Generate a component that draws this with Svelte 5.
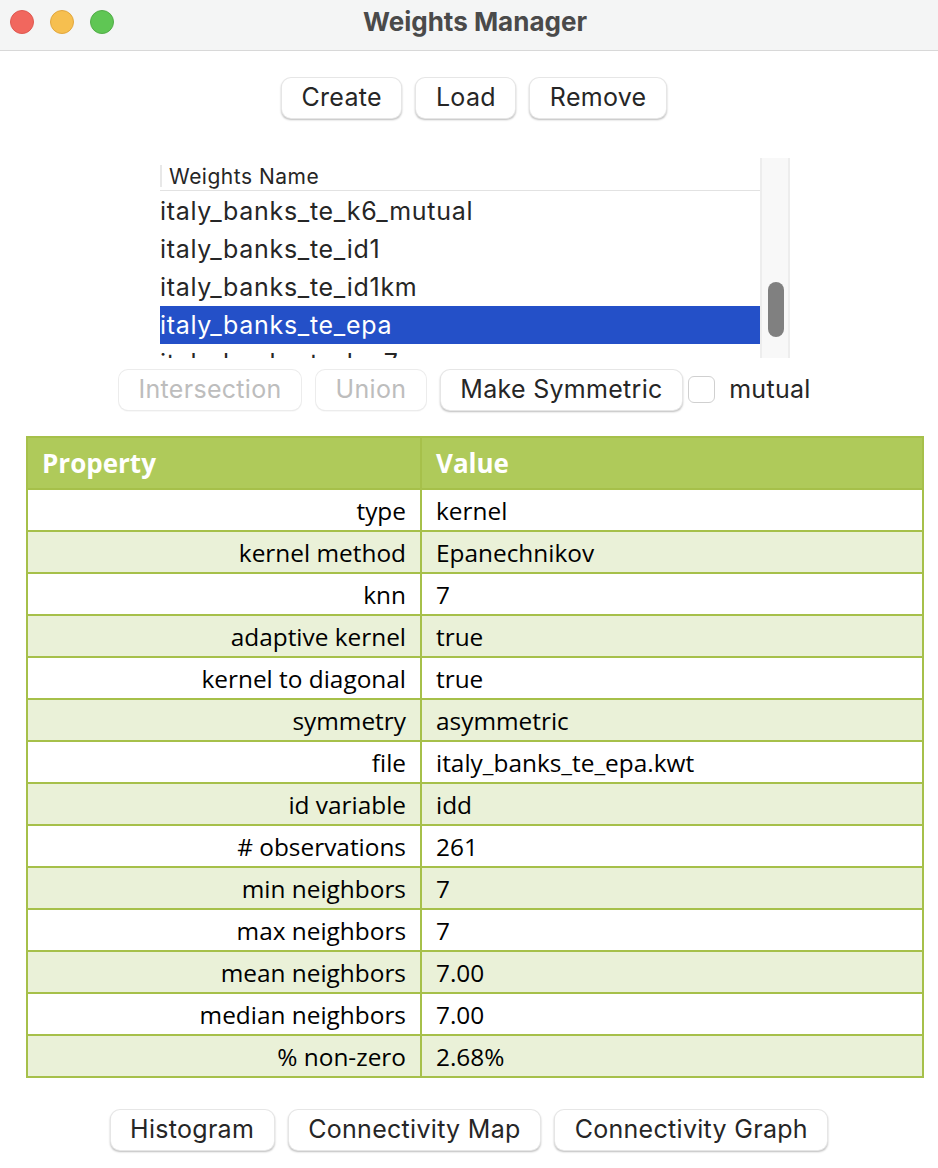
<script>
	const weights = ['italy_banks_te_k6_mutual', 'italy_banks_te_id1', 'italy_banks_te_id1km', 'italy_banks_te_epa', 'italy_banks_te_km7'];
	const props = [
		['type', 'kernel'],
		['kernel method', 'Epanechnikov'],
		['knn', '7'],
		['adaptive kernel', 'true'],
		['kernel to diagonal', 'true'],
		['symmetry', 'asymmetric'],
		['file', 'italy_banks_te_epa.kwt'],
		['id variable', 'idd'],
		['# observations', '261'],
		['min neighbors', '7'],
		['max neighbors', '7'],
		['mean neighbors', '7.00'],
		['median neighbors', '7.00'],
		['% non-zero', '2.68%']
	];
</script>

<div class="window">
	<header class="titlebar">
		<div class="lights">
			<span class="light red"></span>
			<span class="light yellow"></span>
			<span class="light green"></span>
		</div>
		<div class="title">Weights Manager</div>
	</header>

	<div class="btn-row top">
		<button class="btn">Create</button>
		<button class="btn">Load</button>
		<button class="btn">Remove</button>
	</div>

	<div class="list-box">
		<div class="list">
			<div class="list-head"><span>Weights Name</span></div>
			{#each weights as name, i}
				<div class="list-row" class:selected={i == 3}>{name}</div>
			{/each}
		</div>
		<div class="scroll"><div class="thumb"></div></div>
	</div>

	<div class="btn-row ops">
		<button class="btn off">Intersection</button>
		<button class="btn off">Union</button>
		<button class="btn">Make Symmetric</button>
		<label class="check"><span class="box"></span>mutual</label>
	</div>

	<div class="table">
		<div class="cell th left">Property</div>
		<div class="cell th right">Value</div>
		{#each props as p, i}
			<div class="cell key" class:alt={i % 2 == 1}>{p[0]}</div>
			<div class="cell val" class:alt={i % 2 == 1}>{p[1]}</div>
		{/each}
	</div>

	<div class="btn-row bottom">
		<button class="btn">Histogram</button>
		<button class="btn">Connectivity Map</button>
		<button class="btn">Connectivity Graph</button>
	</div>
</div>

<style>
:global(body) {
	background: #fff;
}
.window {
	width: 938px;
	height: 1168px;
	overflow: hidden;
	background: #fff;
	font-family: Inter, "Liberation Sans", sans-serif;
	color: #262626;
}
.titlebar {
	height: 50px;
	border-bottom: 1px solid #d8d8d8;
	background: #f4f5f5;
	position: relative;
	display: flex;
	align-items: center;
	justify-content: center;
}
.lights {
	position: absolute;
	left: 10px;
	top: 10px;
	display: flex;
	gap: 16px;
}
.light {
	width: 24px;
	height: 24px;
	border-radius: 50%;
	box-sizing: border-box;
}
.red { background: #f1675e; border: 1px solid #df5950; }
.yellow { background: #f6bf4f; border: 1px solid #e2a73e; }
.green { background: #5fc654; border: 1px solid #52ad48; }
.title {
	font-size: 26px;
	font-weight: 700;
	color: #4a4a4a;
	margin: -7px 0 0 12px;
}
.btn-row {
	display: flex;
	justify-content: center;
	gap: 15px;
}
.top {
	margin-top: 27px;
	padding-left: 10px;
}
.btn {
	height: 40px;
	padding: 0 19.5px 2px;
	border: 0;
	border-radius: 9px;
	background: #fff;
	box-shadow: 0 0 0 1px #e6e6e6, 0 1.5px 2px 0.5px #bdbdbd;
	font: 25px Inter, "Liberation Sans", sans-serif;
	letter-spacing: 0.3px;
	color: #262626;
}
.off {
	color: #bdbdbd;
	box-shadow: 0 0 0 1px #ececec, 0 1px 1.5px #dcdcdc;
}
.list-box {
	margin: 40px 0 0 160px;
	width: 630px;
	height: 200px;
	display: flex;
	overflow: hidden;
}
.list {
	width: 600px;
	overflow: hidden;
}
.list-head {
	height: 33px;
	box-sizing: border-box;
	border-bottom: 1px solid #e2e2e2;
	font-size: 21px;
	letter-spacing: 0.5px;
	display: flex;
	align-items: flex-end;
	position: relative;
	margin-bottom: 1px;
}
.list-head span {
	border-left: 2px solid #e8e8e8;
	height: 22px;
	line-height: 24px;
	padding-left: 7px;
	margin-bottom: 3px;
}
.list-row {
	height: 38px;
	line-height: 38px;
	font-size: 25px;
	letter-spacing: 0.7px;
	white-space: nowrap;
}
.selected {
	background: #2450c8;
	color: #fff;
}
.scroll {
	width: 30px;
	box-sizing: border-box;
	background: #f8f8f8;
	border-left: 2px solid #ededed;
	border-right: 2px solid #ededed;
	position: relative;
}
.thumb {
	position: absolute;
	left: 6px;
	top: 124px;
	width: 16px;
	height: 55px;
	border-radius: 8px;
	background: #808080;
}
.ops {
	margin-top: 12px;
	justify-content: flex-start;
	padding-left: 119px;
	align-items: flex-start;
}
.check {
	display: flex;
	align-items: center;
	height: 38px;
	font-size: 25px;
	letter-spacing: 0.3px;
	margin-left: -9px;
}
.box {
	width: 27px;
	height: 27px;
	box-sizing: border-box;
	border: 1px solid #d0d0d0;
	border-radius: 6px;
	margin: 0 14px 0 0;
	background: #fff;
}
.table {
	margin: 26px 0 0 26px;
	width: 898px;
	box-sizing: border-box;
	border: 2px solid #a6c04a;
	border-bottom: 0;
	display: grid;
	grid-template-columns: 394px 1fr;
	grid-template-rows: 52px;
	grid-auto-rows: 42px;
	font-family: "Open Sans", sans-serif;
	font-size: 24.4px;
	font-weight: 500;
	color: #000;
}
.cell {
	box-sizing: border-box;
	display: flex;
	align-items: center;
	padding: 0 14px;
	border-bottom: 2px solid #a6c04a;
	white-space: nowrap;
}
.th {
	background: #afca5a;
	color: #fff;
	font-weight: 700;
	font-size: 26px;
}
.left {
	border-right: 2px solid #a6c04a;
}
.key {
	justify-content: flex-end;
	border-right: 2px solid #a6c04a;
}
.alt {
	background: #eaf1d8;
}
.bottom {
	margin-top: 32px;
}
</style>
